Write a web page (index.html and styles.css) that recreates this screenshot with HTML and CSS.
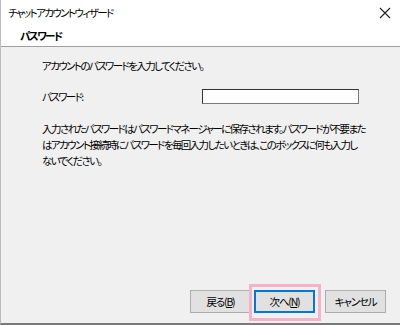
FILE: index.html
```html
<!DOCTYPE html>
<html lang="ja">
<head>
<meta charset="utf-8">
<link rel="stylesheet" href="styles.css">
</head>
<body>
<div class="window">
  <div class="top">
    <div class="titlebar">
      <span class="title">チャットアカウントウィザード</span>
      <svg class="close" width="12" height="12" viewBox="0 0 12 12"><path d="M1 1 L11 11 M11 1 L1 11" stroke="#222" stroke-width="1.1" fill="none"/></svg>
    </div>
    <div class="header">パスワード</div>
  </div>
  <div class="body">
    <div class="content">
      <p class="intro">アカウントのパスワードを入力してください。</p>
      <div class="field">
        <span class="label">パスワード:</span>
        <span class="input"></span>
      </div>
      <p class="note">入力されたパスワードはパスワードマネージャーに保存されます。パスワードが不要また<br>はアカウント接続時にパスワードを毎回入力したいときは、このボックスに何も入力し<br>ないでください。</p>
    </div>
    <div class="footer">
      <span class="btn">戻る(<u>B</u>)</span>
      <span class="btn primary">次へ(<u>N</u>)</span>
      <span class="btn cancel">キャンセル</span>
      <span class="highlight"></span>
    </div>
  </div>
</div>
</body>
</html>
```
FILE: styles.css
```css
html, body {
  margin: 0;
  padding: 0;
  background: #ffffff;
}
body {
  font-family: "Noto Sans CJK JP", "Noto Sans", sans-serif;
  font-size: 10.5px;
  font-feature-settings: "palt";
  letter-spacing: -1.6px;
  white-space: nowrap;
  color: #000;
}
.window {
  width: 400px;
  height: 325px;
  display: flex;
  flex-direction: column;
  box-sizing: border-box;
  border-left: 1px solid #bdbdbd;
  border-bottom: 2px solid #7a7a7a;
}
.top {
  background: #fff;
  border-bottom: 1px solid #a0a0a0;
  height: 47px;
  box-sizing: border-box;
}
.titlebar {
  height: 26px;
  display: flex;
  align-items: center;
  justify-content: space-between;
  padding: 0 9px 0 7px;
}
.title {
  line-height: 26px;
}
.header {
  padding-left: 19px;
  font-weight: bold;
  line-height: 20px;
}
.body {
  flex: 1;
  background: #f0f0f0;
  display: flex;
  flex-direction: column;
  justify-content: space-between;
}
.content {
  padding: 11px 0 0 41px;
}
.intro {
  margin: 0;
  line-height: 16px;
}
.field {
  display: flex;
  align-items: center;
  margin-top: 15px;
  height: 15px;
}
.label {
  width: 160px;
}
.input {
  width: 155px;
  height: 13px;
  background: #fff;
  border: 1px solid #7a7a7a;
  border-top-color: #333;
  border-left-color: #333;
}
.note {
  margin: 17px 0 0;
  line-height: 16px;
}
.footer {
  position: relative;
  display: flex;
  justify-content: flex-end;
  padding: 0 14px 10px 0;
  gap: 3px;
}
.btn {
  width: 59px;
  height: 21px;
  border: 1px solid #adadad;
  background: #e1e1e1;
  display: flex;
  align-items: center;
  justify-content: center;
  line-height: 21px;
  letter-spacing: -1.2px;
}
.btn u {
  text-underline-offset: 1px;
}
.btn.primary {
  border: 2px solid #0078d7;
  width: 57px;
  height: 19px;
}
.btn.cancel {
  margin-left: 7px;
}
.highlight {
  position: absolute;
  left: 248px;
  top: -6px;
  width: 66px;
  height: 31px;
  border: 3px solid #f4b3c9;
  pointer-events: none;
}
```
